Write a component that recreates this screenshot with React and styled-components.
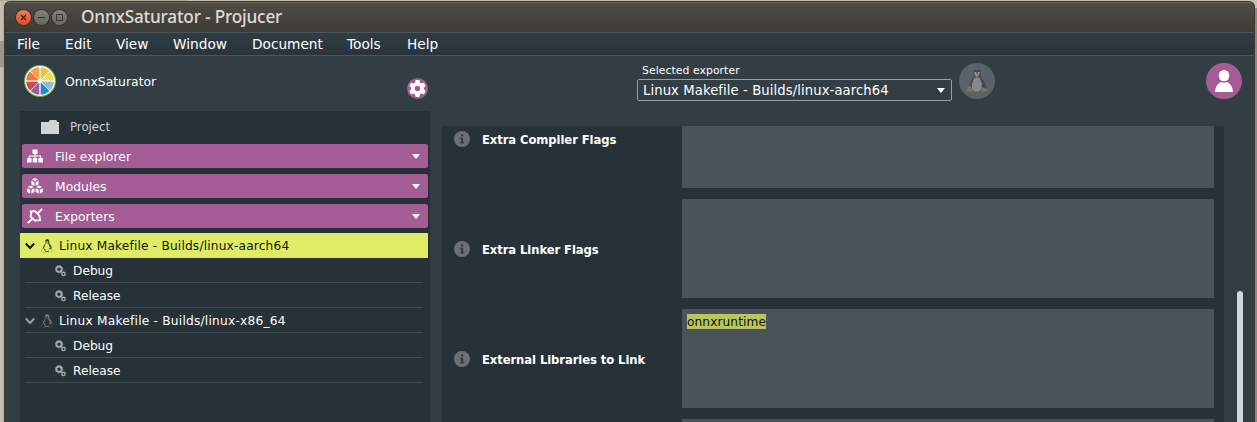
import React from "react";
import styled, { createGlobalStyle } from "styled-components";
import { FaLinux } from "react-icons/fa";

const GlobalStyle = createGlobalStyle`
  * { box-sizing: border-box; }
  html, body { margin: 0; height: 100%; overflow: hidden; }
  body { font-family: "DejaVu Sans", Verdana, sans-serif; color: #fff; }
`;

const Desktop = styled.div`
  display: flex;
  width: 1257px;
  height: 422px;
  padding: 1px 2px 0 4px;
  overflow: hidden;
  background:
    linear-gradient(#aaa99a 0 0) 0 0 / 188px 1px no-repeat,
    linear-gradient(#c6c0b1 0 0) 0 0 / 100% 1px no-repeat,
    linear-gradient(#8e877b, #8e877b) 100% 8px / 2px 100% no-repeat,
    linear-gradient(#9d9788 0 0) 0 41px / 4px 26px no-repeat,
    linear-gradient(90deg, #cbc4b4, #b5af9f) 0 0 / 4px 100% no-repeat,
    #c6c0b1;
`;

const Window = styled.div`
  display: flex;
  flex-direction: column;
  flex: 1;
  border: solid #3b3a36;
  border-width: 1px 1px 0;
  border-radius: 6px 6px 0 0;
  overflow: hidden;
  background: #333e44;
`;

const TitleBar = styled.header`
  display: flex;
  align-items: center;
  height: 30px;
  padding-left: 11px;
  background: linear-gradient(#4f4d46, #3d3b37);
  border-top: 1px solid #69675d;
`;

const WindowButtons = styled.div`
  display: flex;
  gap: 3px;
  margin-top: -1px;
`;

const WindowButton = styled.span`
  display: flex;
  width: 15px;
  height: 15px;
  border-radius: 50%;
  background: ${({ $close }) => ($close ? "linear-gradient(#f47d58, #dd4f21)" : "linear-gradient(#84827a, #66645d)")};
  box-shadow: 0 0 0 1px #34332f;
  svg { width: 15px; height: 15px; fill: none; stroke: ${({ $close }) => ($close ? "#4a1c0d" : "#35342f")}; }
`;

const Title = styled.h1`
  margin: -2px 0 0 14px;
  font: 500 17.2px/28px "Noto Sans", "Open Sans", sans-serif;
  letter-spacing: -0.18px;
  color: #dfdbd2;
  white-space: nowrap;
`;

const MenuBar = styled.nav`
  display: flex;
  gap: 24px;
  height: 24px;
  padding-left: 12px;
  border: solid #4b565c;
  border-width: 1px 0;
  background: linear-gradient(#303c43, #29353b);
`;

const MenuItem = styled.span`
  width: ${({ $width }) => $width}px;
  font-size: 13.7px;
  line-height: 22px;
  white-space: nowrap;
`;

const Body = styled.div`
  display: flex;
  flex: 1;
  padding-left: 15px;
`;

const Sidebar = styled.aside`
  display: flex;
  flex-direction: column;
  width: 410px;
`;

const SideHeader = styled.div`
  display: flex;
  height: 55px;
  padding: 9px 0 0 4px;
  > svg { flex: none; }
`;

const ProjectName = styled.span`
  flex: 1;
  margin-left: 9px;
  font-size: 12.4px;
  line-height: 33px;
`;

const GearBadge = styled.span`
  width: 21px;
  height: 21px;
  margin: 13px 2px 0 0;
  svg { display: block; }
`;

const Tree = styled.div`
  flex: 1;
  background: #263238;
`;

const ProjectRow = styled.div`
  display: flex;
  align-items: center;
  gap: 11px;
  height: 30px;
  padding: 2px 0 0 21px;
  font-size: 11.7px;
  color: #cfd3d4;
`;

const Section = styled.div`
  display: flex;
  align-items: center;
  height: 24px;
  margin: ${({ $first }) => ($first ? 3 : 6)}px 2px 0;
  padding: 0 8px 0 5px;
  border-radius: 2px;
  background: #a45c94;
  font-size: 12.3px;
  letter-spacing: 0.06px;
  line-height: 16px;
  > svg { width: 16px; height: 16px; margin-right: 12px; }
  > span { flex: 1; padding-top: 2px; }
`;

const Arrow = styled.i`
  border: solid transparent;
  border-width: 5px 4px 0;
  border-top-color: #fff;
`;

const ExporterList = styled.div`
  padding-top: 5px;
`;

const ExporterRow = styled.div`
  display: flex;
  align-items: center;
  height: 25px;
  width: 408px;
  padding-left: 5px;
  font-size: 12.2px;
  letter-spacing: ${({ $selected }) => ($selected ? 0.17 : 0.22)}px;
  line-height: 24px;
  color: ${({ $selected }) => ($selected ? "#10150a" : "#fff")};
  background: ${({ $selected }) => ($selected ? "#e0ec65" : "linear-gradient(#414b50 0 0) 5px 100% / 398px 1px no-repeat")};
  .chevron { width: 10px; height: 8px; stroke: ${({ $selected }) => ($selected ? "#10150a" : "#9ba1a3")}; fill: none; stroke-width: 2; }
  .tux { width: 12px; height: 14px; margin: 0 6.5px 0 5.5px; fill: ${({ $selected }) => ($selected ? "#39401c" : "#7d8487")}; }
`;

const ConfigRow = styled.div`
  display: flex;
  align-items: center;
  gap: 7px;
  height: 25px;
  margin: 0 7px 0 5px;
  padding: 1px 0 0 30px;
  border-bottom: 1px solid #414b50;
  font-size: 12.2px;
`;

const Main = styled.main`
  display: flex;
  flex-direction: column;
  flex: 1;
  margin-left: 12px;
`;

const MainHeader = styled.div`
  display: flex;
  align-items: flex-start;
  height: 70px;
  padding: 7px 12px 0 195px;
`;

const ExporterPicker = styled.div`
  width: 315px;
  margin-right: 7px;
`;

const PickerLabel = styled.div`
  height: 16px;
  padding-left: 5px;
  font-size: 10.8px;
  letter-spacing: 0.08px;
  line-height: 15px;
`;

const Combo = styled.div`
  display: flex;
  align-items: center;
  justify-content: space-between;
  height: 22px;
  padding: 0 6px 0 5px;
  border: 1px solid #98a0a4;
  border-radius: 2px;
  font-size: 13.2px;
  letter-spacing: 0.09px;
  line-height: 18px;
  > span { padding-top: 2px; }
`;

const RoundButton = styled.span`
  width: 36px;
  height: 36px;
  border-radius: 50%;
  background: ${({ $color }) => $color};
  svg { display: block; }
`;

const Spacer = styled.span`
  flex: 1;
`;

const Content = styled.div`
  display: flex;
  flex: 1;
`;

const PropertyPanel = styled.div`
  display: flex;
  flex-direction: column;
  gap: 11px;
  width: 782px;
  height: 296px;
  overflow: hidden;
  background: #263238;
`;

const Property = styled.div`
  display: flex;
  flex: none;
  align-items: center;
  height: ${({ $height }) => $height || 99}px;
  padding: 0 10px 0 12px;
`;

const PropertyLabel = styled.span`
  display: flex;
  align-items: center;
  gap: 12px;
  width: 228px;
  font-size: 11.6px;
  font-weight: bold;
  letter-spacing: -0.08px;
  line-height: 16px;
  margin-top: ${({ $shift }) => $shift || 0}px;
  white-space: nowrap;
  > span { padding-top: 2px; }
`;

const Editor = styled.div`
  flex: 1;
  height: 100%;
  padding: 5px;
  background: #4b535a;
  font-size: 12.2px;
  line-height: 16px;
`;

const Highlight = styled.span`
  display: block;
  width: 79px;
  height: 15px;
  letter-spacing: 0.08px;
  color: #10150a;
  background: #b9c55f;
`;

const ScrollThumb = styled.div`
  width: 6px;
  margin: 165px 0 -8px 13px;
  border-radius: 3px;
  background: #cfd8de;
`;

const WHEEL_COLORS = ["#f5bc42", "#efe04a", "#9bb9d6", "#258cc3", "#a45c94", "#e83e50", "#e67a3c", "#f2a04e"];

function WheelLogo() {
  return (
    <svg width="32" height="32" viewBox="-16 -16 32 32">
      <circle r="16" fill="#69bd45" />
      <circle r="14.9" fill="#fff" />
      {WHEEL_COLORS.map((c, i) => (
        <path key={c} d="M0 0V-13.8A13.8 13.8 0 0 1 9.76-9.76Z" fill={c} transform={`rotate(${i * 45})`} />
      ))}
      <path d="M0-14V14M-14 0H14" stroke="#fff" strokeWidth="1.6" opacity=".8" />
      <path d="M-10-10 10 10M10-10-10 10" stroke="#fff" strokeWidth="1" />
      <circle r="2.2" fill="#fff" />
    </svg>
  );
}

function Gear() {
  return (
    <svg width="21" height="21" viewBox="-10.5 -10.5 21 21">
      <circle r="10.5" fill="#a45c94" />
      <circle r="6.4" fill="#fff" />
      {[0, 60, 120, 180, 240, 300].map((a) => (
        <rect key={a} x="-2.2" y="-8.4" width="4.4" height="4" rx="1" fill="#fff" transform={`rotate(${a})`} />
      ))}
      <circle r="2.7" fill="#a45c94" />
    </svg>
  );
}

function Folder() {
  return (
    <svg width="18" height="15" viewBox="0 0 18 15" fill="#d0d4d5">
      <path d="M0 2H8V1L9 0H15L16 1V2H18V14H0Z" />
    </svg>
  );
}

function FileTree() {
  return (
    <svg viewBox="0 0 16 16" fill="#fff">
      <path d="M5.5 1.5H10.5V6H5.5ZM0 10H4.6V14.5H0ZM5.8 10H10.2V14.5H5.8ZM11.4 10H16V14.5H11.4Z" />
      <path d="M8 6V10M2.5 10.5V8H13.5V10.5" fill="none" stroke="#fff" strokeWidth="1.2" />
    </svg>
  );
}

function ModuleCubes() {
  return (
    <svg viewBox="0 0 16 16" fill="#fff">
      {[[8, 0], [3.8, 7.6], [12.2, 7.6]].map(([x, y]) => (
        <path key={x} transform={`translate(${x} ${y})`} d="M0 0 3 1.5 0 3-3 1.5ZM-3.6 2.6-.6 4.2V7.9L-3.6 6.4ZM3.6 2.6 .6 4.2V7.9L3.6 6.4Z" />
      ))}
    </svg>
  );
}

function ExportPlug() {
  return (
    <svg viewBox="0 0 16 16" fill="none" stroke="#fff" strokeWidth="1.9">
      <path d="M2.8 3.4 8 3.2 12.4 7.6 13.2 12.2 7.8 12.6 3.6 8.4 4.4 4.2" />
      <path d="M10.6 5.4 15.2.8M.8 15.2 5.4 10.6" />
    </svg>
  );
}

function Cogs() {
  return (
    <svg width="11" height="12" viewBox="0 0 11 12" fill="none" stroke="#a5abad">
      <circle cx="4" cy="4.2" r="2.7" strokeWidth="1.9" />
      <circle cx="4" cy="4.2" r="3.7" strokeWidth=".7" strokeDasharray="1.45 1.45" />
      <circle cx="8.5" cy="8.9" r="1.7" strokeWidth="1.4" />
    </svg>
  );
}

function Tux() {
  return (
    <svg width="36" height="36" viewBox="0 0 36 36">
      <path d="M14.5 7H21.5L22 14 26 20 27.5 25 24 28H12L9.5 24 12 18 14.5 14Z" fill="#414a50" />
      <path d="M15.5 14.5H20.5L23 21 22.2 26.5 19.5 28.5H16L12.7 26 13 20.5Z" fill="#838b90" />
      <path d="M15.5 9H17.3V11H15.5ZM18.6 9H20.5V11H18.6Z" fill="#969da1" />
      <path d="M15.5 11.5 18 10.5 20.5 11.5 18.5 14H17Z" fill="#98845a" />
      <path d="M8 25 11 22.5 14.5 27.5 14 29 7 28.5ZM22.5 23.5 25 25 28.5 26.5 28 28 24 29 22 28.5Z" fill="#81744f" />
    </svg>
  );
}

function Person() {
  return (
    <svg width="36" height="36" viewBox="0 0 36 36" fill="#fff">
      <ellipse cx="18" cy="12.6" rx="5.3" ry="5.7" />
      <path d="M9 29C9.2 24 11.4 20.7 15 19Q18 20.3 21 19C24.7 20.7 26.8 24 27 29Z" />
    </svg>
  );
}

function Info() {
  return (
    <svg width="16" height="16" viewBox="0 0 16 16">
      <circle cx="8" cy="8" r="8" fill="#6a7073" />
      <path d="M7 3.5H9.2V5.5H7ZM6 6.7H9.1V11.2H10.2V12.4H6V11.2H7.1V7.9H6Z" fill="#30393e" />
    </svg>
  );
}

const Chevron = () => (
  <svg className="chevron" viewBox="0 0 10 8">
    <path d="M.8 1.5 5 6 9.2 1.5" />
  </svg>
);

const MENUS = [["File", 24], ["Edit", 27], ["View", 33], ["Window", 55], ["Document", 71], ["Tools", 36], ["Help", 32]];

const EXPORTERS = [
  { name: "Linux Makefile - Builds/linux-aarch64", selected: true },
  { name: "Linux Makefile - Builds/linux-x86_64", selected: false },
];

export default function App() {
  return (
    <>
      <GlobalStyle />
      <Desktop>
        <Window>
          <TitleBar>
            <WindowButtons>
              <WindowButton $close><svg viewBox="0 0 15 15"><path d="M5 5 10 10M10 5 5 10" strokeWidth="1.3" /></svg></WindowButton>
              <WindowButton><svg viewBox="0 0 15 15"><path d="M4 7.5H11" /></svg></WindowButton>
              <WindowButton><svg viewBox="0 0 15 15"><path d="M4.5 4.5H10.5V10.5H4.5Z" /></svg></WindowButton>
            </WindowButtons>
            <Title>OnnxSaturator - Projucer</Title>
          </TitleBar>
          <MenuBar>
            {MENUS.map(([label, width]) => <MenuItem key={label} $width={width}>{label}</MenuItem>)}
          </MenuBar>
          <Body>
            <Sidebar>
              <SideHeader>
                <WheelLogo />
                <ProjectName>OnnxSaturator</ProjectName>
                <GearBadge><Gear /></GearBadge>
              </SideHeader>
              <Tree>
                <ProjectRow><Folder />Project</ProjectRow>
                <Section $first><FileTree /><span>File explorer</span><Arrow /></Section>
                <Section><ModuleCubes /><span>Modules</span><Arrow /></Section>
                <Section><ExportPlug /><span>Exporters</span><Arrow /></Section>
                <ExporterList>
                  {EXPORTERS.map(({ name, selected }) => (
                    <React.Fragment key={name}>
                      <ExporterRow $selected={selected}><Chevron /><FaLinux className="tux" />{name}</ExporterRow>
                      <ConfigRow><Cogs />Debug</ConfigRow>
                      <ConfigRow><Cogs />Release</ConfigRow>
                    </React.Fragment>
                  ))}
                </ExporterList>
              </Tree>
            </Sidebar>
            <Main>
              <MainHeader>
                <ExporterPicker>
                  <PickerLabel>Selected exporter</PickerLabel>
                  <Combo><span>Linux Makefile - Builds/linux-aarch64</span><Arrow /></Combo>
                </ExporterPicker>
                <RoundButton $color="#596268"><Tux /></RoundButton>
                <Spacer />
                <RoundButton $color="#a45c94"><Person /></RoundButton>
              </MainHeader>
              <Content>
                <PropertyPanel>
                  <Property $height={62}><PropertyLabel $shift={-36}><Info /><span>Extra Compiler Flags</span></PropertyLabel><Editor /></Property>
                  <Property><PropertyLabel><Info /><span>Extra Linker Flags</span></PropertyLabel><Editor /></Property>
                  <Property><PropertyLabel><Info /><span>External Libraries to Link</span></PropertyLabel><Editor><Highlight>onnxruntime</Highlight></Editor></Property>
                  <Property><PropertyLabel /><Editor /></Property>
                </PropertyPanel>
                <ScrollThumb />
              </Content>
            </Main>
          </Body>
        </Window>
      </Desktop>
    </>
  );
}
